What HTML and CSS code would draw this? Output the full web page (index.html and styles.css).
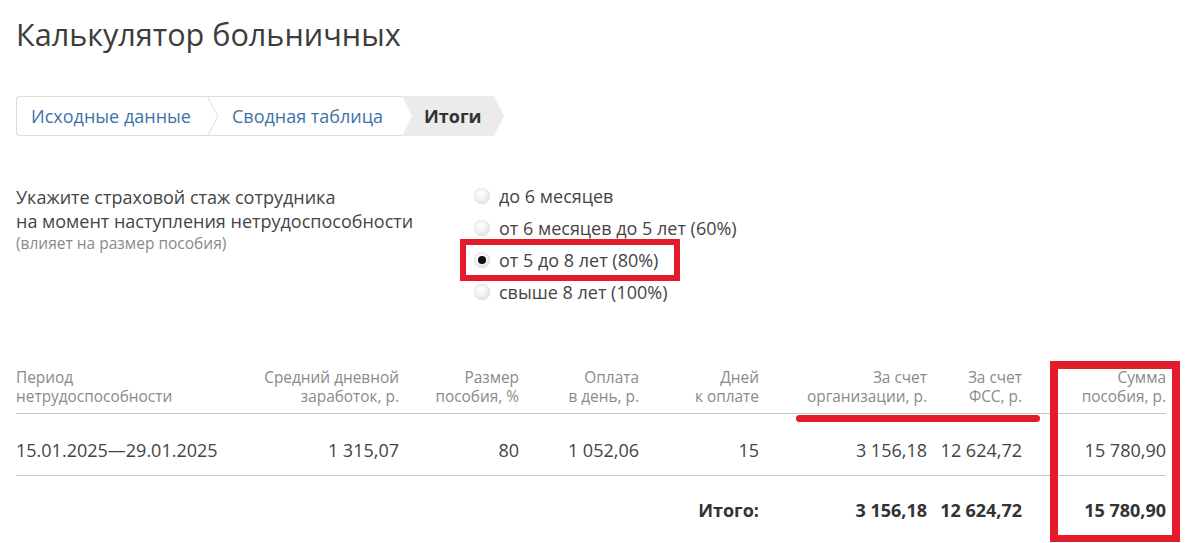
FILE: index.html
```html
<!DOCTYPE html>
<html lang="ru">
<head>
<meta charset="utf-8">
<title>Калькулятор больничных</title>
<link rel="stylesheet" href="styles.css">
</head>
<body>
<div class="page">
  <h1 class="title">Калькулятор больничных</h1>

  <nav class="steps">
    <div class="steps-box">
      <a class="step" href="#">Исходные данные</a>
      <svg class="chev" width="12" height="39" viewBox="0 0 12 39"><polyline points="0.5,0 11,19.5 0.5,39" fill="none" stroke="#dcdcdc" stroke-width="1"/></svg>
      <a class="step step2" href="#">Сводная таблица</a>
    </div>
    <div class="step-current">Итоги</div>
  </nav>

  <section class="experience">
    <div class="exp-label">
      <div class="exp-main">Укажите страховой стаж сотрудника<br>на момент наступления нетрудоспособности</div>
      <div class="exp-note">(влияет на размер пособия)</div>
    </div>
    <div class="radios">
      <label class="radio"><span class="dot"></span>до 6 месяцев</label>
      <label class="radio"><span class="dot"></span>от 6 месяцев до 5 лет (60%)</label>
      <label class="radio checked"><span class="dot"></span>от 5 до 8 лет (80%)<span class="mark mark-radio"></span></label>
      <label class="radio"><span class="dot"></span>свыше 8 лет (100%)</label>
    </div>
  </section>

  <div class="table-wrap">
    <table class="results">
      <colgroup>
        <col class="c1"><col class="c2"><col class="c3"><col class="c4"><col class="c5"><col class="c6"><col class="c7"><col class="c8">
      </colgroup>
      <thead>
        <tr>
          <th class="left">Период<br>нетрудоспособности</th>
          <th>Средний дневной<br>заработок, р.</th>
          <th>Размер<br>пособия, %</th>
          <th>Оплата<br>в день, р.</th>
          <th>Дней<br>к оплате</th>
          <th>За счет<br>организации, р.</th>
          <th>За счет<br>ФСС, р.</th>
          <th>Сумма<br>пособия, р.</th>
        </tr>
      </thead>
      <tbody>
        <tr>
          <td class="left">15.01.2025—29.01.2025</td>
          <td>1 315,07</td>
          <td>80</td>
          <td>1 052,06</td>
          <td>15</td>
          <td>3 156,18</td>
          <td>12 624,72</td>
          <td>15 780,90</td>
        </tr>
      </tbody>
      <tfoot>
        <tr>
          <td class="left"></td>
          <td></td>
          <td></td>
          <td></td>
          <td>Итого:</td>
          <td>3 156,18</td>
          <td>12 624,72</td>
          <td>15 780,90</td>
        </tr>
      </tfoot>
    </table>
    <span class="mark mark-underline"></span>
    <span class="mark mark-sum"></span>
  </div>
</div>
</body>
</html>
```

FILE: styles.css
```css
* { box-sizing: border-box; }

html, body {
  margin: 0;
  padding: 0;
  background: #fff;
}

body {
  font-family: "Open Sans", "Noto Sans", "DejaVu Sans", sans-serif;
  color: #444;
}

.page {
  width: 1186px;
  padding: 0 20px 0 16px;
}

.title {
  margin: 0;
  padding-top: 13px;
  font-size: 30.6px;
  font-weight: 400;
  line-height: 42px;
  color: #3c3c3c;
}

/* steps */
.steps {
  display: flex;
  margin-top: 41px;
  height: 40px;
}

.steps-box {
  display: flex;
  align-items: center;
  height: 40px;
  border: 1px solid #dcdcdc;
  border-right: none;
  border-radius: 4px 0 0 4px;
  background: #fff;
}

.step {
  font-size: 18px;
  color: #3f72a8;
  text-decoration: none;
  padding: 0 16px 0 14px;
  white-space: nowrap;
}

.step2 {
  padding: 0 19px 0 13px;
}

.chev {
  display: block;
  flex: none;
}

.step-current {
  display: flex;
  align-items: center;
  height: 40px;
  width: 102px;
  padding-left: 22px;
  background: #ebebeb;
  font-size: 18px;
  font-weight: 700;
  color: #333;
  clip-path: polygon(0 0, 92px 0, 102px 50%, 92px 100%, 0 100%, 10px 50%);
}

/* experience */
.experience {
  display: grid;
  grid-template-columns: 458px 1fr;
  margin-top: 49px;
}

.exp-main {
  font-size: 18px;
  line-height: 24px;
  color: #444;
  white-space: nowrap;
}

.exp-note {
  font-size: 15.5px;
  line-height: 20px;
  color: #8a8a8a;
}

.radios {
  display: flex;
  flex-direction: column;
  margin-top: -5px;
}

.radio {
  position: relative;
  display: flex;
  align-items: center;
  height: 32px;
  font-size: 18px;
  color: #444;
  white-space: nowrap;
}

.dot {
  width: 16px;
  height: 16px;
  border-radius: 50%;
  margin-right: 9px;
  background: radial-gradient(circle at 40% 35%, #ffffff 0%, #f2f2f2 45%, #d2d2d2 100%);
  box-shadow: 0 0 0 1px #e4e4e4 inset;
  position: relative;
  flex: none;
}

.checked .dot::after {
  content: "";
  position: absolute;
  left: 4px;
  top: 4px;
  width: 8px;
  height: 8px;
  border-radius: 50%;
  background: #111;
}

/* annotation marks */
.mark {
  position: absolute;
  pointer-events: none;
}

.mark-radio {
  left: -14px;
  top: -5px;
  width: 220px;
  height: 42px;
  border: 6px solid #e41b2b;
}

/* table */
.table-wrap {
  position: relative;
  margin-top: 60px;
  width: 1150px;
}

.results {
  width: 1150px;
  table-layout: fixed;
  border-collapse: collapse;
}

.c1 { width: 243px; }
.c2 { width: 140px; }
.c3 { width: 120px; }
.c4 { width: 120px; }
.c5 { width: 120px; }
.c6 { width: 168px; }
.c7 { width: 95px; }
.c8 { width: 144px; }

.results th {
  font-size: 15.4px;
  font-weight: 400;
  line-height: 19px;
  color: #8a8a8a;
  text-align: right;
  padding: 0 0 7px;
  border-bottom: 1px solid #c8c8c8;
  vertical-align: bottom;
  white-space: nowrap;
}

.results td {
  font-size: 18px;
  line-height: 24px;
  color: #444;
  text-align: right;
  padding: 24px 0 13px;
  white-space: nowrap;
}

.results tbody td {
  border-bottom: 1px solid #c8c8c8;
}

.results tfoot td {
  font-weight: 700;
  color: #333;
  padding: 22px 0 20px;
}

.results .left {
  text-align: left;
}

.mark-underline {
  left: 780px;
  top: 47px;
  width: 244px;
  height: 7px;
  border-radius: 4px;
  background: #e41b2b;
}

.mark-sum {
  left: 1034px;
  top: -7px;
  width: 130px;
  height: 182px;
  border: 8px solid #e41b2b;
}
```
